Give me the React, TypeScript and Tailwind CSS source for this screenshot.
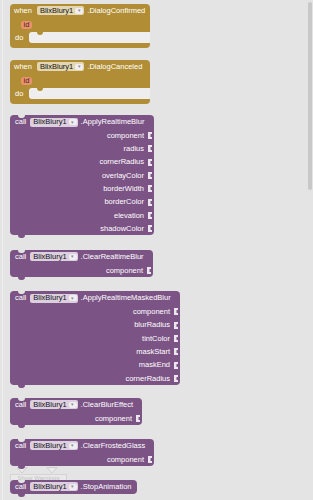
import React from 'react';

function Chip({ gold }: { gold?: boolean }) {
  return (
    <span
      className={`flex h-[9px] items-center rounded-[2px] pl-[3px] pr-[1px] text-[#111] ${
        gold ? 'bg-[#e3d6b1]' : 'bg-[#dccfe0]'
      }`}
    >
      <span className="leading-none">BlixBlury1</span>
      <span className="ml-[2px] flex h-[6px] w-[8px] items-center justify-center rounded-[2px] bg-[#f1eef2] text-[5px] leading-none text-[#8a8a8a]">
        ▾
      </span>
    </span>
  );
}

function Plug() {
  return (
    <svg width="4" height="7" viewBox="0 0 4 7" className="ml-[4px] mr-[2px] shrink-0">
      <rect width="4" height="7" fill="#ece7ee" />
      <path d="M2.5 2h1.5v3h-1.5z" fill="#7c5385" />
    </svg>
  );
}

function Arg({ label }: { label: string }) {
  return (
    <div className="flex h-[13.3px] items-center justify-end">
      <span className="leading-none">{label}</span>
      <Plug />
    </div>
  );
}

function CallBlock({ method, args, className }: { method: string; args: string[]; className: string }) {
  return (
    <div className={`relative rounded-[4px] bg-[#7c5385] text-white ${className}`}>
      {/* previous / next notches */}
      <div className="absolute left-[8px] top-0 h-[3px] w-[7px] rounded-b-[3px] bg-[#e4e4e4]" />
      <div className="absolute -bottom-[3px] left-[8px] h-[3px] w-[7px] rounded-b-[3px] bg-[#7c5385]" />
      <div className="flex h-[14px] items-center pl-[5px]">
        <span className="leading-none">call</span>
        <span className="ml-[4px]">
          <Chip />
        </span>
        <span className="ml-[3px] whitespace-nowrap leading-none">.{method}</span>
      </div>
      {args.map((a) => (
        <Arg key={a} label={a} />
      ))}
    </div>
  );
}

function EventBlock({ event, className }: { event: string; className: string }) {
  return (
    <div className={`relative w-[140px] text-white ${className}`}>
      <div className="flex h-[13px] items-center rounded-t-[4px] bg-[#b18e35] pl-[4px]">
        <span className="leading-none">when</span>
        <span className="ml-[5px]">
          <Chip gold />
        </span>
        <span className="ml-[3px] whitespace-nowrap leading-none">.{event}</span>
      </div>
      <div className="flex h-[15px] items-center bg-[#b18e35] pl-[11px]">
        <span className="flex h-[8px] items-center rounded-[3px] bg-[#ea9270] px-[2.5px] leading-none text-[#4d2413]">
          id
        </span>
      </div>
      <div className="flex h-[11px] bg-[#b18e35]">
        <div className="flex w-[19px] items-center pl-[5px] leading-none">do</div>
        <div className="relative flex-1 rounded-l-[3px] bg-[#eeeeee]">
          <div className="absolute left-[8px] top-0 h-[3px] w-[6px] rounded-b-[3px] bg-[#b18e35]" />
        </div>
      </div>
      <div className="h-[5px] rounded-b-[4px] bg-[#b18e35]" />
    </div>
  );
}

export default function App() {
  return (
    <div className="relative h-[500px] w-[313px] overflow-hidden bg-[#e4e4e4] pl-[2px] font-['Liberation_Sans',Arial,sans-serif] text-[7.5px] leading-none">
      {/* warnings indicator, sitting just above the last block */}
      <div className="absolute left-[10px] top-[467px]">
        <svg width="60" height="7" viewBox="0 0 60 7">
          <polygon points="7,0.5 17,0.5 12,6" fill="#ebebeb" stroke="#cdcdcd" strokeWidth="1" />
          <polygon points="37,0.5 47,0.5 42,6" fill="#ebebeb" stroke="#cdcdcd" strokeWidth="1" />
        </svg>
        <div className="flex h-[7px] w-[57px] items-center justify-center border-x border-t border-[#d4d4d4] bg-[#e9e9e9] text-[6px] leading-[6px] text-[#c2c2c2]">
          Show Warnings
        </div>
      </div>

      <div className="relative flex h-full flex-col items-start border-l border-[#ededed] pl-[7px] pt-[4px]">
        <EventBlock event="DialogConfirmed" className="" />
        <EventBlock event="DialogCanceled" className="mt-[12px]" />
        <CallBlock
          method="ApplyRealtimeBlur"
          className="mt-[11px] w-[144px]"
          args={['component', 'radius', 'cornerRadius', 'overlayColor', 'borderWidth', 'borderColor', 'elevation', 'shadowColor']}
        />
        <CallBlock method="ClearRealtimeBlur" className="mt-[14.5px] w-[143px]" args={['component']} />
        <CallBlock
          method="ApplyRealtimeMaskedBlur"
          className="mt-[14px] w-[170px]"
          args={['component', 'blurRadius', 'tintColor', 'maskStart', 'maskEnd', 'cornerRadius']}
        />
        <CallBlock method="ClearBlurEffect" className="mt-[13px] w-[132px]" args={['component']} />
        <CallBlock method="ClearFrostedGlass" className="mt-[13.5px] w-[144px]" args={['component']} />
        <CallBlock method="StopAnimation" className="mt-[13.5px] w-[127px]" args={[]} />
      </div>

      {/* scrollbar */}
      <div className="absolute right-[1px] top-[2px] h-[188px] w-[4px] rounded-full bg-[#c8c8c8]" />
    </div>
  );
}
